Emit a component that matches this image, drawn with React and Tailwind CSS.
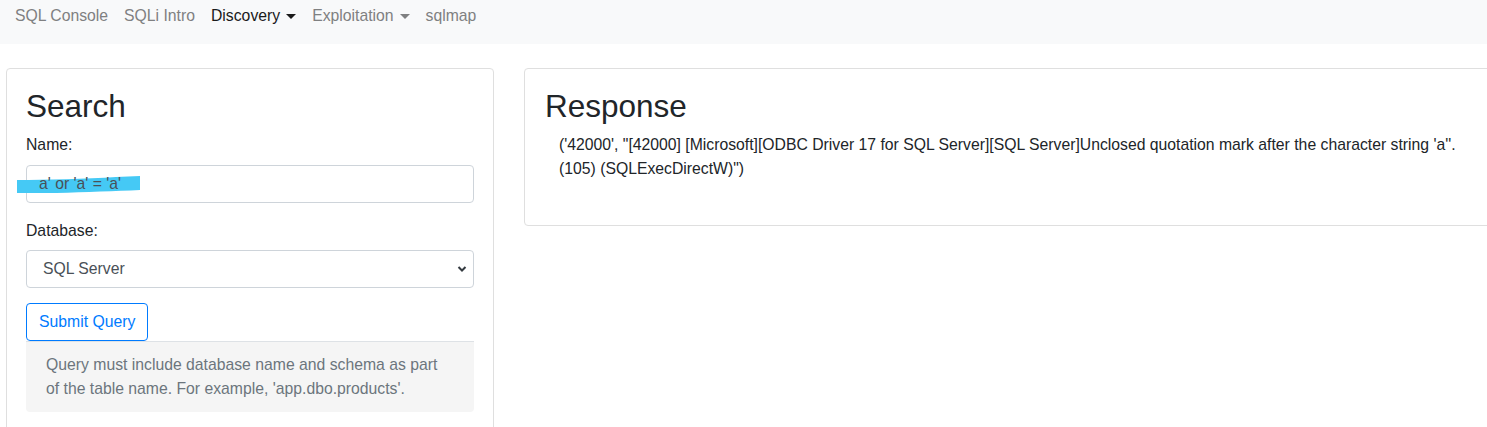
import React from "react";

function Caret() {
  return (
    <span className="ml-[6px] inline-block h-0 w-0 border-x-[5px] border-t-[5px] border-b-0 border-solid border-x-transparent border-t-current align-[0.255em]" />
  );
}

export default function App() {
  return (
    <div
      className="h-[427px] w-[1487px] overflow-hidden bg-white text-[15.76px] leading-[24px] text-[#212529]"
      style={{ fontFamily: '"Liberation Sans", Arial, sans-serif' }}
    >
      <nav className="flex h-[44px] items-start bg-[#f8f9fa] pl-[7px] pt-[4px]">
        <a className="px-[8px] text-[#7f8081]">SQL Console</a>
        <a className="px-[8px] text-[#7f8081]">SQLi Intro</a>
        <a className="flex items-center px-[8px] text-[#1a1a1a]">
          Discovery
          <Caret />
        </a>
        <a className="flex items-center px-[8px] text-[#7f8081]">
          Exploitation
          <Caret />
        </a>
        <a className="px-[8px] text-[#7f8081]">sqlmap</a>
      </nav>

      <div className="mt-[24px] flex items-start gap-[30px] pl-[6px]">
        <div className="w-[488px] shrink-0 rounded border border-[#dfdfdf] px-[19px] pt-[18px] pb-[20px]">
          <h2 className="mb-[8px] text-[31.5px] leading-[38.4px] font-normal">Search</h2>
          <div className="mb-[8px]">Name:</div>
          <div className="relative mb-[16px] h-[38px] rounded border border-[#ced4da] bg-white">
            <svg
              className="absolute left-[-11px] top-[10px]"
              width="126"
              height="18"
              viewBox="0 0 126 18"
            >
              <path
                d="M1 4 C 30 4, 70 3, 100 1 L 124 0 L 124 14 C 100 15, 70 16, 40 17 L 1 17 Z"
                fill="#45c9f5"
              />
            </svg>
            <span className="relative block pl-[12px] pt-[6px] text-[#495057]">
              a' or 'a' = 'a'
            </span>
          </div>
          <div className="mb-[7px]">Database:</div>
          <div className="mb-[15px] flex h-[38px] items-center justify-between rounded border border-[#ced4da] bg-white pl-[16px] pr-[6px] text-[#495057]">
            <span>SQL Server</span>
            <svg width="10" height="8" viewBox="0 0 10 8">
              <path d="M1.5 2 L5 5.5 L8.5 2" fill="none" stroke="#343a40" strokeWidth="2" />
            </svg>
          </div>
          <button className="flex h-[38px] items-center rounded border border-[#007bff] px-[12px] text-[#007bff]">
            Submit Query
          </button>
          <div className="rounded-b border-t border-[#dee2e6] bg-[#f5f5f5] px-[20px] py-[11px] text-[#6c757d]">
            Query must include database name and schema as part of the table name. For example,
            'app.dbo.products'.
          </div>
        </div>

        <div className="w-[975px] shrink-0 rounded border border-[#dfdfdf] px-[20px] pt-[18px] pb-[44px]">
          <h2 className="mb-[8px] text-[31.5px] leading-[38.4px] font-normal">Response</h2>
          <p className="ml-[14px]">
            ('42000', "[42000] [Microsoft][ODBC Driver 17 for SQL Server][SQL Server]Unclosed quotation
            mark after the character string 'a''. (105) (SQLExecDirectW)")
          </p>
        </div>
      </div>
    </div>
  );
}
